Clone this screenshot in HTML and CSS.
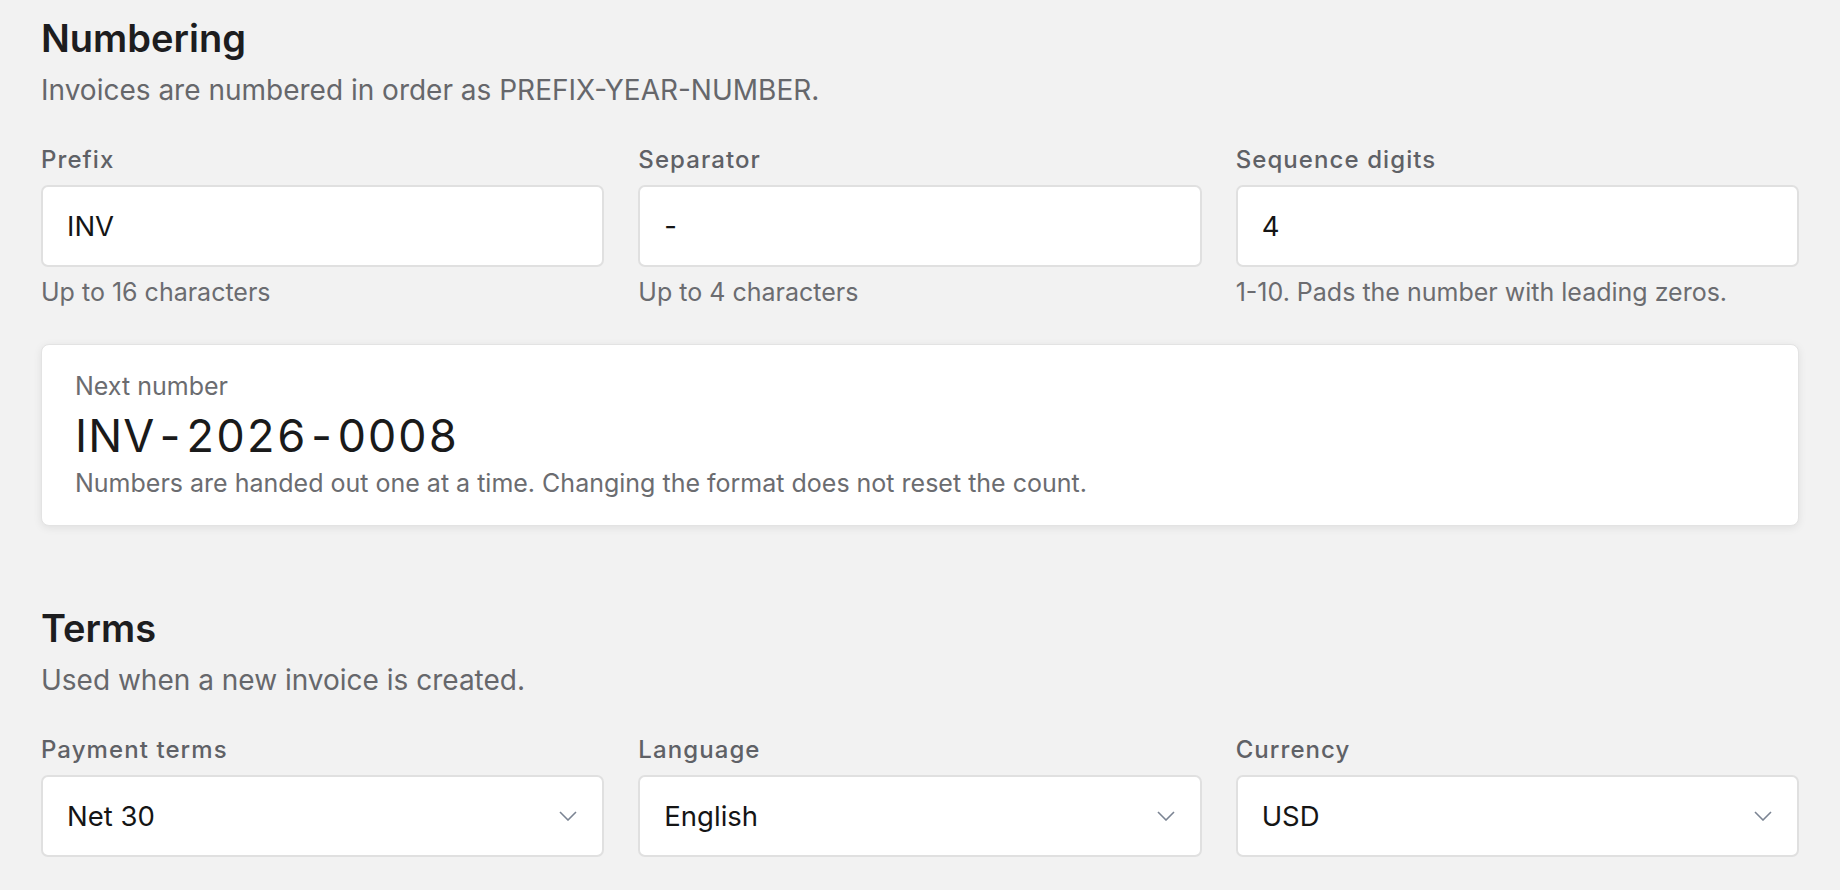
FILE: index.html
```html
<!DOCTYPE html>
<html lang="en">
<head>
    <meta charset="UTF-8">
    <meta name="viewport" content="width=device-width, initial-scale=1.0">
    <title>Invoice Settings</title>
    <link rel="stylesheet" href="styles.css">
</head>
<body>
    <main class="page">
        <section class="section">
            <h2>Numbering</h2>
            <p class="section-desc">Invoices are numbered in order as PREFIX-YEAR-NUMBER.</p>
            <div class="fields">
                <div class="field">
                    <label for="prefix">Prefix</label>
                    <input type="text" id="prefix" value="INV">
                    <span class="hint">Up to 16 characters</span>
                </div>
                <div class="field">
                    <label for="separator">Separator</label>
                    <input type="text" id="separator" value="-">
                    <span class="hint">Up to 4 characters</span>
                </div>
                <div class="field">
                    <label for="digits">Sequence digits</label>
                    <input type="text" id="digits" value="4">
                    <span class="hint">1-10. Pads the number with leading zeros.</span>
                </div>
            </div>
            <div class="preview">
                <span class="preview-label">Next number</span>
                <span class="preview-number">INV-2026-0008</span>
                <span class="preview-note">Numbers are handed out one at a time. Changing the format does not reset the count.</span>
            </div>
        </section>

        <section class="section terms">
            <h2>Terms</h2>
            <p class="section-desc">Used when a new invoice is created.</p>
            <div class="fields">
                <div class="field">
                    <label for="paymentTerms">Payment terms</label>
                    <div class="select">
                        <select id="paymentTerms">
                            <option>Net 30</option>
                            <option>Net 15</option>
                            <option>Due on receipt</option>
                        </select>
                        <svg class="chevron" width="18" height="10" viewBox="0 0 18 10"><path d="M1 1l8 8 8-8" fill="none" stroke="#7b8493" stroke-width="1.6"/></svg>
                    </div>
                </div>
                <div class="field">
                    <label for="language">Language</label>
                    <div class="select">
                        <select id="language">
                            <option>English</option>
                            <option>German</option>
                            <option>French</option>
                        </select>
                        <svg class="chevron" width="18" height="10" viewBox="0 0 18 10"><path d="M1 1l8 8 8-8" fill="none" stroke="#7b8493" stroke-width="1.6"/></svg>
                    </div>
                </div>
                <div class="field">
                    <label for="currency">Currency</label>
                    <div class="select">
                        <select id="currency">
                            <option>USD</option>
                            <option>EUR</option>
                            <option>GBP</option>
                        </select>
                        <svg class="chevron" width="18" height="10" viewBox="0 0 18 10"><path d="M1 1l8 8 8-8" fill="none" stroke="#7b8493" stroke-width="1.6"/></svg>
                    </div>
                </div>
            </div>
        </section>
    </main>
</body>
</html>
```

FILE: styles.css
```css
body {
    font-family: Inter, "Noto Sans", sans-serif;
    margin: 0;
    padding: 0;
    background-color: #f2f2f2;
    color: #1d1d1f;
}
.page {
    padding: 16px 41px 0;
}
h2 {
    font-size: 38px;
    line-height: 44px;
    font-weight: 600;
    margin: 0;
    color: #1d1d1f;
}
.section-desc {
    font-size: 28px;
    line-height: 32px;
    margin: 14px 0 0;
    color: #66676b;
}
.fields {
    display: grid;
    grid-template-columns: repeat(3, 1fr);
    column-gap: 34px;
    margin-top: 40px;
}
.field {
    display: flex;
    flex-direction: column;
}
label {
    font-size: 24px;
    line-height: 28px;
    font-weight: 500;
    letter-spacing: 0.045em;
    color: #5f6166;
    margin-bottom: 11px;
}
input, select {
    font-family: inherit;
    font-size: 27.5px;
    color: #151515;
    height: 82px;
    box-sizing: border-box;
    padding: 0 24px;
    border: 2px solid #e0e0e0;
    border-radius: 7px;
    background-color: white;
    width: 100%;
    outline: none;
}
.hint {
    font-size: 25px;
    line-height: 28px;
    margin-top: 11px;
    color: #6b6c70;
}
.preview {
    display: flex;
    flex-direction: column;
    margin-top: 38px;
    padding: 27px 33px 28px;
    background-color: white;
    border: 1px solid #e3e3e3;
    border-radius: 8px;
    box-shadow: 0 2px 8px rgba(0, 0, 0, 0.08);
}
.preview-label {
    font-size: 25px;
    line-height: 28px;
    color: #6b6c70;
}
.preview-number {
    font-size: 45px;
    line-height: 52px;
    letter-spacing: 0.025em;
    font-variant-numeric: tabular-nums;
    color: #1a1a1a;
    margin-top: 10px;
}
.preview-note {
    font-size: 25px;
    line-height: 28px;
    color: #6b6c70;
    margin-top: 7px;
}
.terms {
    margin-top: 80px;
}
.select {
    position: relative;
}
.select select {
    appearance: none;
    -webkit-appearance: none;
}
.chevron {
    position: absolute;
    right: 27px;
    top: 36px;
    pointer-events: none;
}
```
